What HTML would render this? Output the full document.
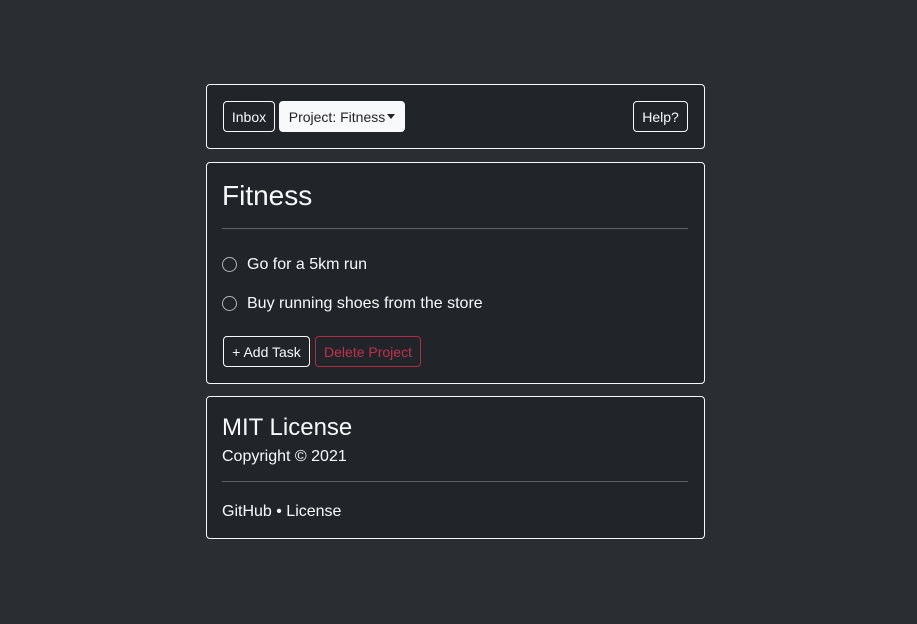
<!DOCTYPE html>
<html><head><style>
body{margin:0;width:917px;height:624px;background:#2a2e32;font-family:"Liberation Sans",sans-serif;color:#f8f9fa;position:relative;overflow:hidden}
.card{position:absolute;left:206px;width:497px;border:1px solid #f8f9fa;border-radius:4px;background:#212529;box-sizing:content-box}
.btn{position:absolute;height:29px;border:1px solid #f8f9fa;border-radius:4px;font-size:14px;line-height:30px;text-align:center;color:#f8f9fa}
.radio{position:absolute;left:222px;width:13px;height:13px;border:1px solid #adb5bd;border-radius:50%}
.t{position:absolute;white-space:nowrap}
hr{position:absolute;left:222px;width:466px;margin:0;border:0;border-top:1px solid #5c6166}
</style></head><body>
<div class="card" style="top:84px;height:63px"></div>
<div class="btn" style="left:223px;top:101px;width:50px">Inbox</div>
<div class="btn" style="left:279px;top:101px;width:124px;background:#f8f9fa;color:#212529">Project: Fitness<span style="display:inline-block;width:0;height:0;border-left:4px solid transparent;border-right:4px solid transparent;border-top:5px solid #212529;vertical-align:3px;margin-left:2px"></span></div>
<div class="btn" style="left:633px;top:101px;width:53px">Help?</div>

<div class="card" style="top:162px;height:220px"></div>
<div class="t" style="left:222px;top:180px;font-size:28px">Fitness</div>
<hr style="top:228px">
<div class="radio" style="top:257px"></div>
<div class="t" style="left:247px;top:256px;font-size:16px">Go for a 5km run</div>
<div class="radio" style="top:296px"></div>
<div class="t" style="left:247px;top:295px;font-size:16px">Buy running shoes from the store</div>
<div class="btn" style="left:223px;top:336px;width:85px">+ Add Task</div>
<div class="btn" style="left:315px;top:336px;width:104px;border-color:#b02a45;color:#c2304d">Delete Project</div>

<div class="card" style="top:396px;height:141px"></div>
<div class="t" style="left:222px;top:414px;font-size:24px">MIT License</div>
<div class="t" style="left:222px;top:448px;font-size:16px">Copyright © 2021</div>
<hr style="top:481px">
<div class="t" style="left:222px;top:503px;font-size:16px">GitHub • License</div>
</body></html>
